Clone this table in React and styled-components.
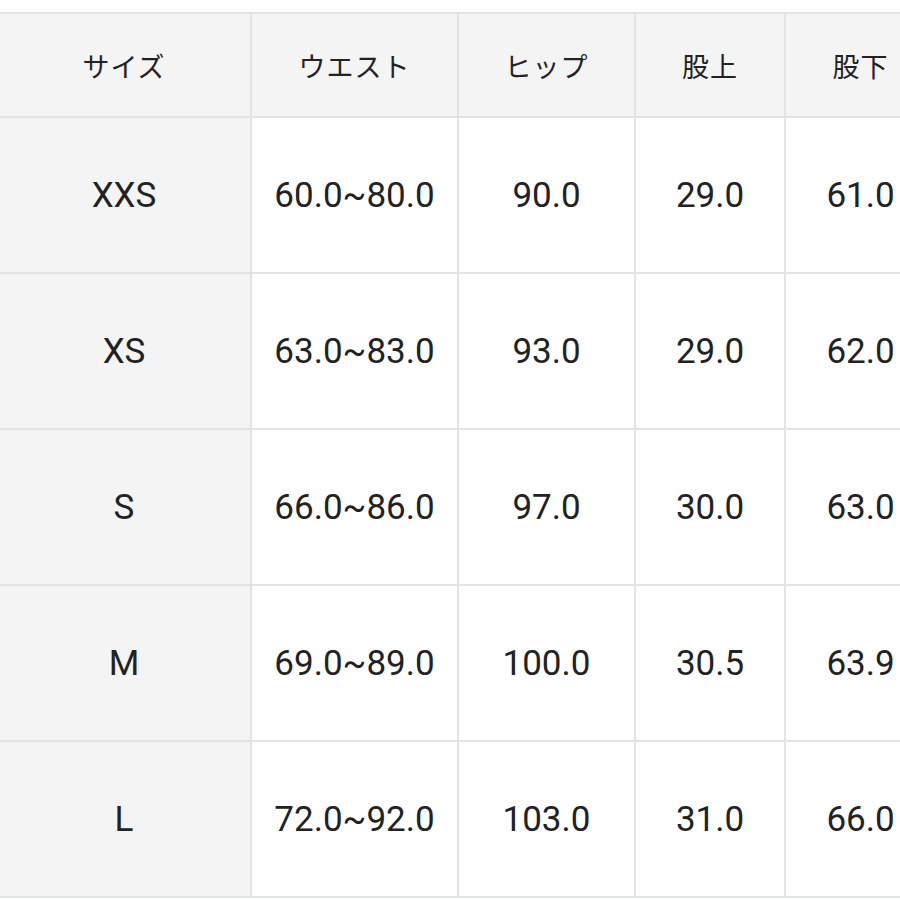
import React from 'react';
import styled, { createGlobalStyle } from 'styled-components';

const GlobalStyle = createGlobalStyle`
  html, body {
    margin: 0;
    padding: 0;
    background: #fff;
    overflow: hidden;
  }
  body {
    font-family: Roboto, "Noto Sans CJK JP", sans-serif;
    color: #222;
  }
`;

const Wrap = styled.div`
  padding-top: 12px;
  width: 940px;
`;

const Table = styled.table`
  border-collapse: collapse;
  table-layout: fixed;
  width: 939px;
  margin-left: -4px;

  th,
  td {
    border: 2px solid #e2e3e5;
    text-align: center;
    vertical-align: middle;
    padding: 0;
  }
`;

const HeadCell = styled.th`
  height: 102px;
  background: #f4f4f5;
  font-family: "Noto Sans CJK JP", sans-serif;
  font-weight: 400;
  font-size: 27px;
  color: #222;
  letter-spacing: 1px;
`;

const Cell = styled.td`
  height: 154px;
  font-size: 35px;
  color: #222;
  background: ${(p) => (p.$label ? '#f4f4f5' : '#fff')};
`;

const columns = [
  { label: 'サイズ', width: 254 },
  { label: 'ウエスト', width: 207 },
  { label: 'ヒップ', width: 177 },
  { label: '股上', width: 150 },
  { label: '股下', width: 151 },
];

const rows = [
  ['XXS', '60.0~80.0', '90.0', '29.0', '61.0'],
  ['XS', '63.0~83.0', '93.0', '29.0', '62.0'],
  ['S', '66.0~86.0', '97.0', '30.0', '63.0'],
  ['M', '69.0~89.0', '100.0', '30.5', '63.9'],
  ['L', '72.0~92.0', '103.0', '31.0', '66.0'],
];

export default function App() {
  return (
    <Wrap>
      <GlobalStyle />
      <Table>
        <colgroup>
          {columns.map((c) => (
            <col key={c.label} style={{ width: c.width }} />
          ))}
        </colgroup>
        <thead>
          <tr>
            {columns.map((c) => (
              <HeadCell key={c.label}>{c.label}</HeadCell>
            ))}
          </tr>
        </thead>
        <tbody>
          {rows.map((r) => (
            <tr key={r[0]}>
              {r.map((v, i) => (
                <Cell key={i} $label={i === 0}>
                  {v}
                </Cell>
              ))}
            </tr>
          ))}
        </tbody>
      </Table>
    </Wrap>
  );
}
